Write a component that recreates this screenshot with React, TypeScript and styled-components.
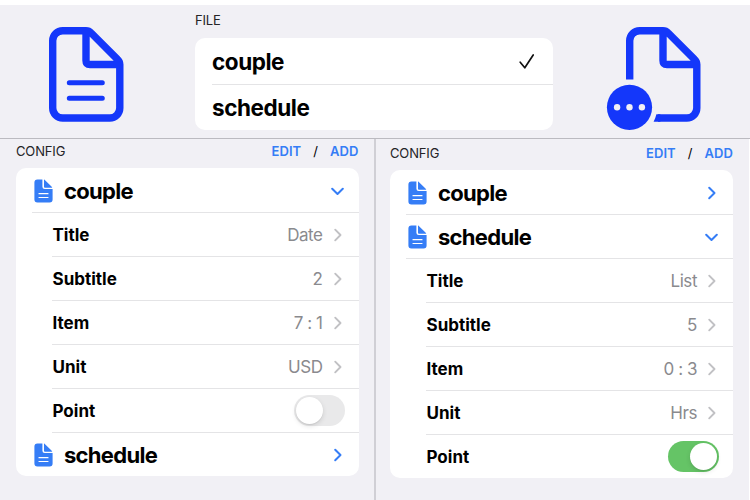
import React from "react";
import styled, { createGlobalStyle } from "styled-components";

const Global = createGlobalStyle`
  * { box-sizing: border-box; }
  html, body { margin: 0; background: #fff; }
  body { font-family: Inter, "Liberation Sans", sans-serif; color: #000; overflow: hidden; }
  svg { display: block; flex: none; }
`;

const Screen = styled.div`
  width: 750px;
  height: 500px;
  padding-top: 5px;
  display: flex;
  flex-direction: column;
`;

const TopBar = styled.header`
  flex: none;
  height: 134px;
  display: grid;
  grid-template-columns: 195px 358px 197px;
  background: #f1f0f5;
  border-bottom: 1px solid #bbbac0;
`;

const IconSlot = styled.div<{ $left: number }>`
  padding: 20px 0 0 ${(p) => p.$left}px;
`;

const FileSection = styled.section`
  padding-top: 7px;
`;

const SectionTitle = styled.h2`
  margin: 0;
  font-size: 13px;
  line-height: 16px;
  font-weight: 400;
  letter-spacing: -0.15px;
  color: #242427;
`;

const FileCard = styled.div`
  margin-top: 10.3px;
  height: 92px;
  border-radius: 10px;
  background: #fff;
  overflow: hidden;
`;

const FileRow = styled.div<{ $divided?: boolean }>`
  margin-left: 17px;
  height: 46px;
  padding: 1px 18px 0 0;
  display: flex;
  align-items: center;
  justify-content: space-between;
  border-top: ${(p) => (p.$divided ? "1px solid #e4e4e6" : "0")};
`;

const Name = styled.span<{ $large?: boolean }>`
  font-size: ${(p) => (p.$large ? "22.5px" : "22px")};
  line-height: 28px;
  font-weight: 650;
  letter-spacing: ${(p) => (p.$large ? "-0.45px" : "-0.7px")};
`;

const Panels = styled.main`
  flex: 1;
  display: grid;
  grid-template-columns: 376px 373px 1px;
  background: linear-gradient(#f1f0f5, #f1f0f5) 0 0 / 749px 100% no-repeat;
`;

const Panel = styled.section<{ $second?: boolean }>`
  padding: ${(p) => (p.$second ? "6px 16px 0 14px" : "4px 15.5px 0 16px")};
  border-right: ${(p) => (p.$second ? "0" : "2px solid #d0cfd5")};
`;

const PanelHeader = styled.div`
  display: flex;
  align-items: center;
  height: 16px;
`;

const Actions = styled.div`
  margin-left: auto;
  display: flex;
  gap: 12px;
  align-items: center;
  font-size: 13px;
  line-height: 16px;
`;

const Action = styled.button`
  border: 0;
  padding: 0;
  background: none;
  font: 600 13px/16px Inter, "Liberation Sans", sans-serif;
  letter-spacing: 0.1px;
  color: #357df6;
`;

const Card = styled.div`
  margin-top: 9.4px;
  height: 308px;
  border-radius: 10px;
  background: #fff;
  overflow: hidden;
`;

const Row = styled.div<{ $inset: number; $line: number; $first?: boolean }>`
  height: 44px;
  padding: 1px 14px 0 ${(p) => p.$inset}px;
  display: flex;
  align-items: center;
  background: ${(p) =>
    p.$first
      ? "none"
      : `linear-gradient(#e4e4e6, #e4e4e6) ${p.$line}px 0 / 100% 1px no-repeat`};
`;

const GroupName = styled(Name)`
  margin-left: 11px;
`;

const Label = styled.span`
  font-size: 17px;
  line-height: 22px;
  font-weight: 650;
  letter-spacing: 0;
`;

const Trailing = styled.span`
  margin-left: auto;
  display: flex;
  align-items: center;
  gap: 9px;
`;

const Value = styled.span`
  font-size: 17px;
  line-height: 22px;
  letter-spacing: -0.45px;
  color: #8a8a8e;
`;

const Switch = styled.span<{ $on: boolean }>`
  width: 51px;
  height: 31px;
  padding: 2px;
  border-radius: 16px;
  display: flex;
  justify-content: ${(p) => (p.$on ? "flex-end" : "flex-start")};
  background: ${(p) => (p.$on ? "#65c466" : "#e9e9ea")};
`;

const Knob = styled.span`
  width: 27px;
  height: 27px;
  border-radius: 50%;
  background: #fff;
  box-shadow: 0 2px 5px rgba(0, 0, 0, 0.12), 0 1px 1px rgba(0, 0, 0, 0.06);
`;

const DocIcon = () => (
  <svg width="78" height="98" viewBox="47 25 78 98" fill="none" stroke="#1437fa" strokeWidth="7.4">
    <path d="M86 30.7H62.7a10 10 0 0 0-10 10V108a10 10 0 0 0 10 10h47.1a10 10 0 0 0 10-10V64.5q0-3-2.3-5.2L91.2 33Q89 30.7 86 30.7V60.5q0 4 4 4h29.8" />
    <path d="M69.3 82.8h33M69.3 98.3h33" strokeWidth="5" strokeLinecap="round" />
  </svg>
);

const DocMoreIcon = () => (
  <svg width="98" height="106" viewBox="605 25 98 106">
    <g fill="none" stroke="#1437fa" strokeWidth="7.4">
      <path d="M629.7 79.5V40.7a10 10 0 0 1 10-10H663q3 0 5.2 2.3l26.3 26.3q2.3 2.2 2.3 5.2V108a10 10 0 0 1-10 10H658M663 30.7v29.8q0 4 4 4h29.8" />
    </g>
    <path d="M653.6 121.7q1.8-3.2 2.8-7.4h4v7.4z" fill="#1437fa" />
    <circle cx="629.5" cy="107.3" r="22.6" fill="#1437fa" />
    <g fill="#f1f0f5">
      <circle cx="617.1" cy="107.3" r="3.2" />
      <circle cx="629.5" cy="107.3" r="3.2" />
      <circle cx="641.9" cy="107.3" r="3.2" />
    </g>
  </svg>
);

const SmallDocIcon = () => (
  <svg width="19" height="24" viewBox="0 0 19 24">
    <path
      d="M3.4.4h5v7.4q0 2.3 2.3 2.3h7.9v10.4q0 3-3 3H3.4q-3 0-3-3V3.4q0-3 3-3z"
      fill="#357df6"
    />
    <path d="M10 .6q.7.2 1.3.8l6.2 6q.6.6.8 1.3h-7.4q-.9 0-.9-.9z" fill="#357df6" />
    <path d="M5 14.7h9M5 18.5h9" stroke="#fff" strokeWidth="1.2" strokeLinecap="round" />
  </svg>
);

const Chevron = ({ color = "#c1c1c4", weight = 1.9 }: { color?: string; weight?: number }) => (
  <svg width="13" height="14" viewBox="0 0 13 14" fill="none" stroke={color} strokeWidth={weight} strokeLinecap="round" strokeLinejoin="round">
    <path d="M3.2 1.7 8.5 7l-5.3 5.3" />
  </svg>
);

const ChevronDown = () => (
  <svg width="14" height="14" viewBox="0 0 14 14" fill="none" stroke="#357df6" strokeWidth="2" strokeLinecap="round" strokeLinejoin="round">
    <path d="M1.2 4.7 6.5 10l5.3-5.3" />
  </svg>
);

const CheckIcon = () => (
  <svg width="16" height="17" viewBox="0 0 16 17" fill="none" stroke="#111" strokeWidth="1.7" strokeLinecap="round" strokeLinejoin="round">
    <path d="M1.2 9.2 5.8 14.8 14.2 2" />
  </svg>
);

type Item =
  | { kind: "group"; name: string; open: boolean }
  | { kind: "value"; name: string; value: string }
  | { kind: "switch"; name: string; on: boolean };

const coupleItems: Item[] = [
  { kind: "group", name: "couple", open: true },
  { kind: "value", name: "Title", value: "Date" },
  { kind: "value", name: "Subtitle", value: "2" },
  { kind: "value", name: "Item", value: "7 : 1" },
  { kind: "value", name: "Unit", value: "USD" },
  { kind: "switch", name: "Point", on: false },
  { kind: "group", name: "schedule", open: false },
];

const scheduleItems: Item[] = [
  { kind: "group", name: "couple", open: false },
  { kind: "group", name: "schedule", open: true },
  { kind: "value", name: "Title", value: "List" },
  { kind: "value", name: "Subtitle", value: "5" },
  { kind: "value", name: "Item", value: "0 : 3" },
  { kind: "value", name: "Unit", value: "Hrs" },
  { kind: "switch", name: "Point", on: true },
];

const ConfigRow = ({ item, previous }: { item: Item; previous?: Item }) => (
  <Row
    $inset={item.kind === "group" ? 18 : 36.5}
    $line={previous && previous.kind !== "group" ? 36 : 16}
    $first={!previous}
  >
    {item.kind === "group" ? (
      <>
        <SmallDocIcon />
        <GroupName>{item.name}</GroupName>
      </>
    ) : (
      <Label>{item.name}</Label>
    )}
    <Trailing>
      {item.kind === "group" && (item.open ? <ChevronDown /> : <Chevron color="#357df6" weight={2} />)}
      {item.kind === "value" && (
        <>
          <Value>{item.value}</Value>
          <Chevron />
        </>
      )}
      {item.kind === "switch" && (
        <Switch $on={item.on}>
          <Knob />
        </Switch>
      )}
    </Trailing>
  </Row>
);

const ConfigPanel = ({ items, second }: { items: Item[]; second?: boolean }) => (
  <Panel $second={second}>
    <PanelHeader>
      <SectionTitle>CONFIG</SectionTitle>
      <Actions>
        <Action>EDIT</Action>
        <span>/</span>
        <Action>ADD</Action>
      </Actions>
    </PanelHeader>
    <Card>
      {items.map((item, i) => (
        <ConfigRow key={item.name} item={item} previous={items[i - 1]} />
      ))}
    </Card>
  </Panel>
);

export default function App() {
  return (
    <>
      <Global />
      <Screen>
        <TopBar>
          <IconSlot $left={47}>
            <DocIcon />
          </IconSlot>
          <FileSection>
            <SectionTitle>FILE</SectionTitle>
            <FileCard>
              <FileRow>
                <Name $large>couple</Name>
                <CheckIcon />
              </FileRow>
              <FileRow $divided>
                <Name $large>schedule</Name>
              </FileRow>
            </FileCard>
          </FileSection>
          <IconSlot $left={52}>
            <DocMoreIcon />
          </IconSlot>
        </TopBar>
        <Panels>
          <ConfigPanel items={coupleItems} />
          <ConfigPanel items={scheduleItems} second />
        </Panels>
      </Screen>
    </>
  );
}
